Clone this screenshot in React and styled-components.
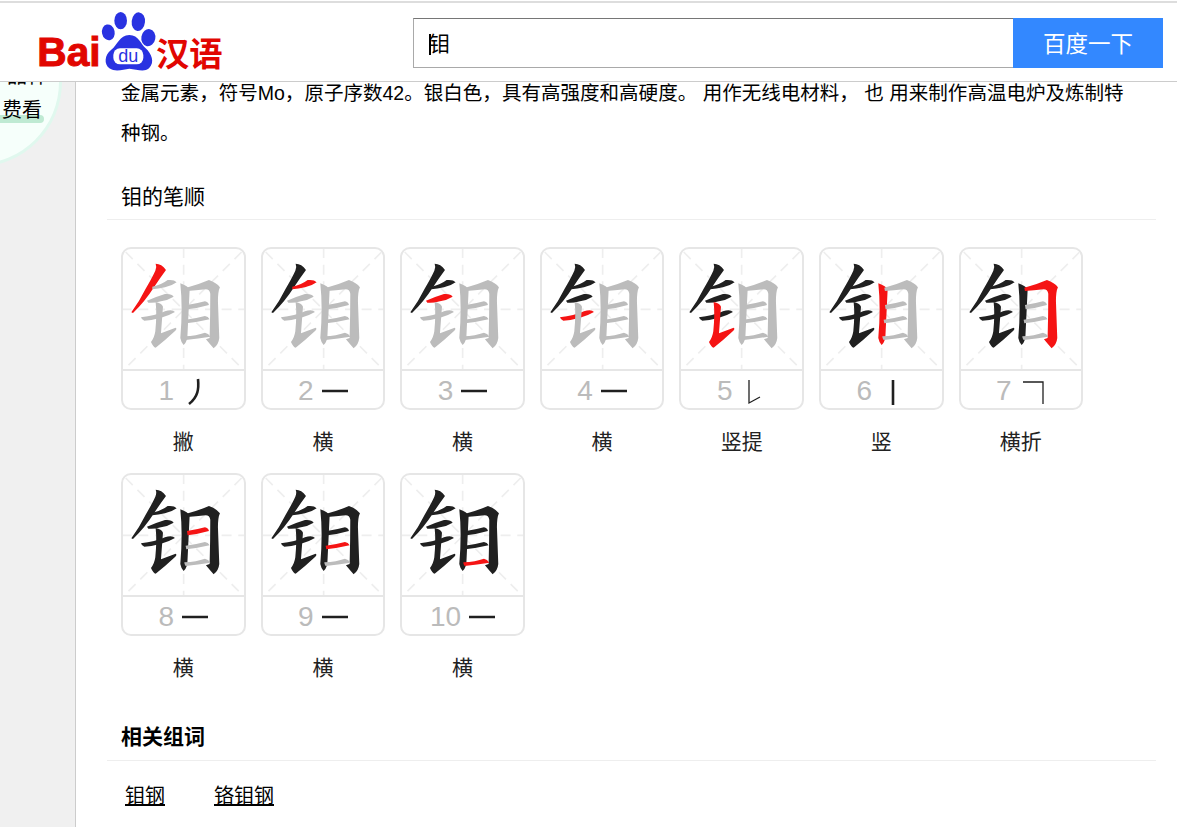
import React from "react";
import styled, { createGlobalStyle } from "styled-components";

const CJK = `"Liberation Sans", "Noto Sans CJK SC", sans-serif`;

// one path per stroke of the character, in a 372 box
const STROKE_PATHS = [
  "M102 47 Q120 47 133 66 Q114 92 98 116 Q70 160 34 195 L29 193 Q52 162 72 122 Q92 88 101 68 Q106 56 102 47 Z",
  "M92 116 Q120 110 138 96 Q158 94 165 103 Q150 114 130 118 Q110 122 92 124 Z",
  "M76 158 Q104 146 130 138 Q150 136 156 146 Q140 156 118 160 Q96 166 80 164 Z",
  "M58 208 Q100 204 130 190 Q152 182 160 192 Q140 204 118 209 Q90 217 68 218 Q60 216 58 208 Z",
  "M102 162 Q120 165 124 176 L118 256 L162 239 Q167 242 161 248 Q130 277 102 299 Q95 298 88 282 Q98 270 101 250 Q106 200 102 162 Z",
  "M176 106 Q200 114 204 126 L197 272 Q192 286 186 291 Q178 282 176 270 Q184 180 176 106 Z",
  "M194 119 Q230 110 262 96 Q285 104 295 118 Q289 130 289 160 L293 270 Q291 290 276 301 Q266 290 253 274 L264 270 Q266 200 266 137 Q264 124 252 124 Q222 128 196 129 Z",
  "M196 171 Q225 167 250 160 Q260 162 262 171 Q230 180 198 184 Z",
  "M192 215 Q225 211 250 204 Q260 205 264 214 Q230 222 194 226 Z",
  "M188 265 Q225 263 250 254 Q260 256 266 266 Q230 272 192 276 Q188 272 188 265 Z",
];

const SHAPES = {
  pie: "M16 4 C17 14 16 22 7 29",
  heng: "M0 16 H26",
  shuti: "M9 5 V28 L20 22",
  shu: "M13 5 V30",
  hengzhe: "M3 7 H23 V29",
};

const STEPS = [
  { name: "撇", shape: "pie" },
  { name: "横", shape: "heng" },
  { name: "横", shape: "heng" },
  { name: "横", shape: "heng" },
  { name: "竖提", shape: "shuti" },
  { name: "竖", shape: "shu" },
  { name: "横折", shape: "hengzhe" },
  { name: "横", shape: "heng" },
  { name: "横", shape: "heng" },
  { name: "横", shape: "heng" },
];

const strokeColor = (i, current) => {
  if (i === current) return "#f51414";
  return i < current ? "#202020" : "#bcbcbc";
};

const App = () => (
  <Page>
    <GlobalStyle />
    <Header>
      <TopLine />
      <HeaderRow>
        <Logo />
        <Search>
          <SearchInput>
            <Caret />钼
          </SearchInput>
          <SearchButton>百度一下</SearchButton>
        </Search>
      </HeaderRow>
    </Header>

    <Sidebar>
      <Badge>
        <BadgeLine $overhang>品种</BadgeLine>
        <BadgeLine>
          <Marked>费看</Marked>
        </BadgeLine>
      </Badge>
    </Sidebar>

    <Main>
      <Paragraph>
        金属元素，符号Mo，原子序数42。银白色，具有高强度和高硬度。 用作无线电材料， 也 用来制作高温电炉及炼制特种钢。
      </Paragraph>

      <SectionTitle>钼的笔顺</SectionTitle>
      <Steps>
        {STEPS.map((step, i) => (
          <Step key={i}>
            <Card>
              <Guide viewBox="4 3 362 360">
                <GuideLines />
                {STROKE_PATHS.map((d, n) => (
                  <path key={n} d={d} fill={strokeColor(n, i)} />
                ))}
              </Guide>
              <CardFooter>
                <StepNumber>{i + 1}</StepNumber>
                <StrokeIcon viewBox="0 0 26 32" $thin={step.shape === "hengzhe" || step.shape === "shuti"}>
                  <path d={SHAPES[step.shape]} />
                </StrokeIcon>
              </CardFooter>
            </Card>
            <StepName>{step.name}</StepName>
          </Step>
        ))}
      </Steps>

      <BoldTitle>相关组词</BoldTitle>
      <Words>
        <Word href="#">钼钢</Word>
        <Word href="#">铬钼钢</Word>
      </Words>
    </Main>
  </Page>
);

export default App;

const GuideLines = () => (
  <g stroke="#eeeeee" strokeWidth="5" strokeDasharray="30 20" fill="none">
    <path d="M186 0 V372" />
    <path d="M0 184 H372" />
    <path d="M12 12 L360 360" />
    <path d="M360 12 L12 360" />
  </g>
);

const Logo = () => (
  <LogoSvg viewBox="0 0 600 210">
    <text
      x="22"
      y="184"
      fontFamily="Liberation Sans"
      fontWeight="700"
      fontSize="122"
      stroke="#e10601"
      strokeWidth="3"
      fill="#e10601"
    >
      Bai
    </text>
    <g fill="#2932e1">
      <ellipse cx="235" cy="82" rx="19" ry="24" transform="rotate(-12 235 82)" />
      <ellipse cx="272" cy="47" rx="19" ry="26" />
      <ellipse cx="325" cy="50" rx="20" ry="28" transform="rotate(6 325 50)" />
      <ellipse cx="355" cy="98" rx="21" ry="26" transform="rotate(10 355 98)" />
      <path d="M298 90 C268 90 263 120 243 135 C224 150 221 177 238 190 C258 203 280 193 298 191 C320 193 342 203 357 190 C376 172 364 145 347 130 C332 118 327 90 298 90 Z" />
    </g>
    <rect x="250" y="130" width="90" height="48" rx="20" fill="#fff" />
    <text x="295" y="172" textAnchor="middle" fontFamily="Liberation Sans" fontSize="54" fill="#2932e1">
      du
    </text>
    <text x="378" y="182" fontFamily="Noto Sans CJK SC" fontWeight="700" fontSize="100" fill="#e10601">
      汉语
    </text>
  </LogoSvg>
);

const GlobalStyle = createGlobalStyle`
  html, body {
    margin: 0;
    height: 100%;
    overflow: hidden;
    background: #fff;
  }
  body {
    font-family: ${CJK};
    color: #000;
  }
`;

const Page = styled.div`
  display: flex;
  height: 100vh;
  overflow: hidden;
`;

const Header = styled.header`
  position: fixed;
  top: 0;
  left: 0;
  right: 0;
  height: 82px;
  box-sizing: border-box;
  padding-top: 1px;
  background: #fff;
  border-bottom: 1px solid #cccccc;
  z-index: 2;
`;

const TopLine = styled.div`
  height: 2px;
  background: #dddddd;
`;

const HeaderRow = styled.div`
  display: flex;
  justify-content: space-between;
  padding: 0 14px 0 30px;
`;

const LogoSvg = styled.svg`
  display: block;
  width: 200px;
  height: 70px;
  margin-top: 2px;
`;

const Search = styled.div`
  display: flex;
  width: 750px;
  height: 50px;
  margin-top: 15px;
`;

const SearchInput = styled.div`
  flex: 1;
  box-sizing: border-box;
  padding: 1px 0 0 15px;
  border: 1px solid #a9a9a9;
  border-top-color: #767676;
  border-right: 0;
  font-size: 21px;
  line-height: 48px;
`;

const Caret = styled.span`
  display: inline-block;
  width: 2px;
  height: 21px;
  margin-right: -2px;
  background: #000;
  vertical-align: -4px;
`;

const SearchButton = styled.div`
  width: 150px;
  background: #3388ff;
  color: #fff;
  font-size: 22.5px;
  line-height: 54px;
  text-align: center;
`;

const Sidebar = styled.aside`
  flex: none;
  position: relative;
  width: 75px;
  background: #f0f0f0;
  border-right: 1px solid #cccccc;
`;

const Badge = styled.div`
  position: absolute;
  top: -3px;
  left: -109px;
  width: 171px;
  height: 170px;
  box-sizing: border-box;
  padding: 59px 17px 0 0;
  border: 3px solid #e0f8ee;
  border-radius: 50%;
  background: #f6fffb;
  display: flex;
  flex-direction: column;
  align-items: flex-end;
  isolation: isolate;
`;

const BadgeLine = styled.div`
  margin-right: ${({ $overhang }) => ($overhang ? "-5px" : "0")};
  font-size: 20px;
  line-height: 34px;
`;

const Marked = styled.span`
  position: relative;
  display: inline-block;

  &::after {
    content: "";
    position: absolute;
    top: 22px;
    left: -60px;
    right: -2px;
    height: 8px;
    border-radius: 4px;
    background: #bfead3;
    z-index: -1;
  }
`;

const Main = styled.main`
  flex: 1;
  min-width: 0;
  padding: 73px 21px 0 31px;
`;

const Paragraph = styled.p`
  margin: 0;
  padding: 0 20px 0 14px;
  font-size: 19.55px;
  line-height: 40px;
`;

const SectionTitle = styled.h2`
  margin: 28px 0 0;
  padding: 0 0 6px 14px;
  border-bottom: 1px solid #eeeeee;
  font-size: 21px;
  font-weight: 400;
  line-height: 32px;
`;

const BoldTitle = styled(SectionTitle)`
  margin-top: 22px;
  padding-bottom: 7px;
  font-weight: 700;
`;

const Steps = styled.div`
  display: flex;
  flex-wrap: wrap;
  column-gap: 15px;
  padding: 27px 0 0 14px;
`;

const Step = styled.div`
  width: 124.6px;
  margin-bottom: 15px;
`;

const Card = styled.div`
  box-sizing: border-box;
  height: 163px;
  border: 2px solid #e6e6e6;
  border-radius: 10px;
  overflow: hidden;
`;

const Guide = styled.svg`
  display: block;
  width: 120.6px;
  height: 120px;
`;

const CardFooter = styled.div`
  display: flex;
  align-items: center;
  justify-content: center;
  gap: 8px;
  box-sizing: border-box;
  height: 39px;
  padding-top: 2px;
  border-top: 2px solid #e6e6e6;
`;

const StepNumber = styled.span`
  color: #bbbbbb;
  font-size: 28px;
  line-height: 37px;
`;

const StrokeIcon = styled.svg`
  width: 26px;
  height: 32px;
  fill: none;
  stroke: #202020;
  stroke-width: ${({ $thin }) => ($thin ? 1.3 : 2.6)};
`;

const StepName = styled.div`
  margin-top: 16px;
  color: #222222;
  font-size: 21px;
  line-height: 32px;
  text-align: center;
`;

const Words = styled.div`
  display: flex;
  gap: 49px;
  padding: 18px 0 0 18px;
`;

const Word = styled.a`
  color: #000;
  font-size: 20px;
  line-height: 34px;
  text-decoration: underline;
`;
